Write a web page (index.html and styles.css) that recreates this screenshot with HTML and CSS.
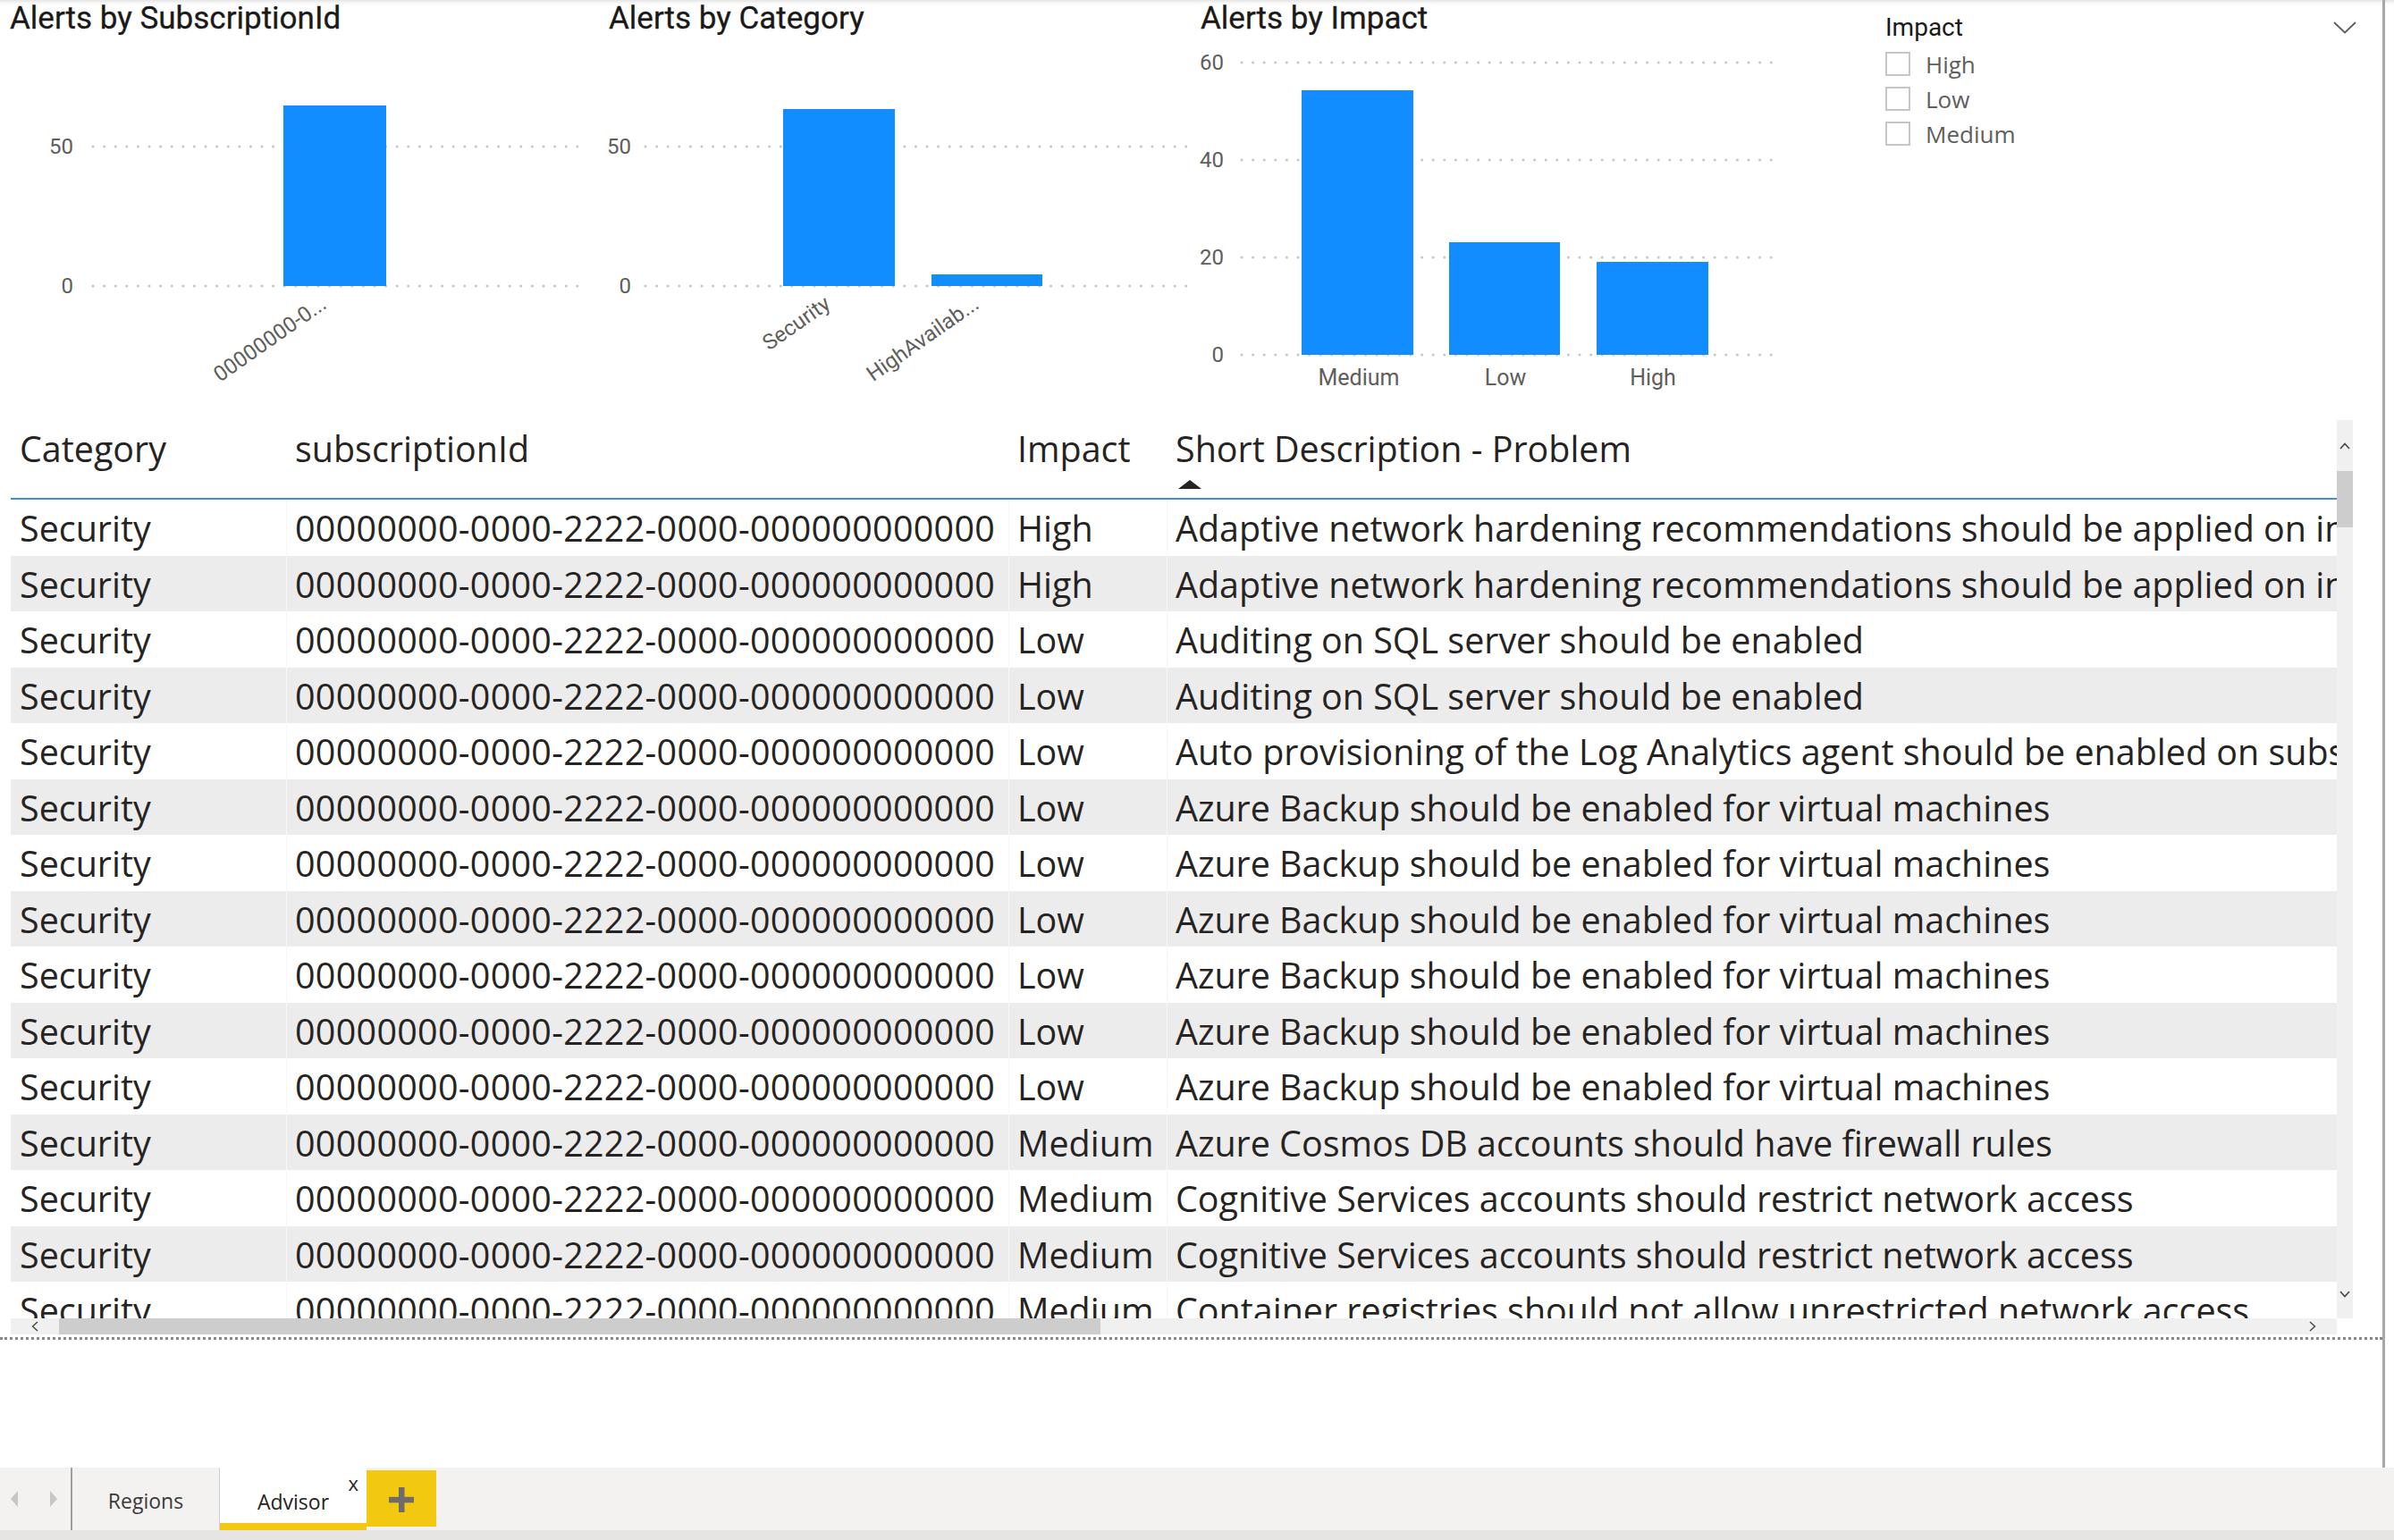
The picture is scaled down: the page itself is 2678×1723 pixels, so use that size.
FILE: index.html
```html
<!DOCTYPE html>
<html>
<head>
<meta charset="utf-8">
<title>Advisor</title>
<link rel="stylesheet" href="styles.css">
</head>
<body>
<div class="page">
  <div class="canvas">
    <div class="report">
      <div class="visuals">
        <section class="chart chart-sub">
          <div class="vtitle">Alerts by SubscriptionId</div>
          <svg class="plot" width="670" height="429" viewBox="0 0 670 429">
            <line class="grid" x1="104" y1="123" x2="656" y2="123"/>
            <line class="grid" x1="104" y1="279" x2="656" y2="279"/>
            <text class="tick" x="82" y="123" text-anchor="end" dominant-baseline="central">50</text>
            <text class="tick" x="82" y="279" text-anchor="end" dominant-baseline="central">0</text>
            <rect class="bar" x="317" y="77" width="115" height="202"/>
            <text class="tick" transform="translate(362 296) rotate(-35)" text-anchor="end" dominant-baseline="central">00000000-0...</text>
          </svg>
        </section>
        <section class="chart chart-cat">
          <div class="vtitle">Alerts by Category</div>
          <svg class="plot" width="662" height="429" viewBox="0 0 662 429">
            <line class="grid" x1="52" y1="123" x2="661" y2="123"/>
            <line class="grid" x1="52" y1="279" x2="661" y2="279"/>
            <text class="tick" x="36" y="123" text-anchor="end" dominant-baseline="central">50</text>
            <text class="tick" x="36" y="279" text-anchor="end" dominant-baseline="central">0</text>
            <rect class="bar" x="206" y="81" width="125" height="198"/>
            <rect class="bar" x="372" y="266" width="124" height="13"/>
            <text class="tick" transform="translate(256 296) rotate(-35)" text-anchor="end" dominant-baseline="central">Security</text>
            <text class="tick" transform="translate(422 296) rotate(-35)" text-anchor="end" dominant-baseline="central">HighAvailab...</text>
          </svg>
        </section>
        <section class="chart chart-imp">
          <div class="vtitle">Alerts by Impact</div>
          <svg class="plot" width="758" height="429" viewBox="0 0 758 429">
            <line class="grid" x1="57" y1="29" x2="658" y2="29"/>
            <line class="grid" x1="57" y1="138" x2="658" y2="138"/>
            <line class="grid" x1="57" y1="247" x2="658" y2="247"/>
            <line class="grid" x1="57" y1="356" x2="658" y2="356"/>
            <text class="tick" x="37" y="29" text-anchor="end" dominant-baseline="central">60</text>
            <text class="tick" x="37" y="138" text-anchor="end" dominant-baseline="central">40</text>
            <text class="tick" x="37" y="247" text-anchor="end" dominant-baseline="central">20</text>
            <text class="tick" x="37" y="356" text-anchor="end" dominant-baseline="central">0</text>
            <rect class="bar" x="124" y="60" width="125" height="296"/>
            <rect class="bar" x="289" y="230" width="124" height="126"/>
            <rect class="bar" x="454" y="252" width="125" height="104"/>
            <text class="tick xlab" x="188" y="381" text-anchor="middle" dominant-baseline="central">Medium</text>
            <text class="tick xlab" x="352" y="381" text-anchor="middle" dominant-baseline="central">Low</text>
            <text class="tick xlab" x="517" y="381" text-anchor="middle" dominant-baseline="central">High</text>
          </svg>
        </section>
        <section class="slicer">
          <div class="slicer-head">
            <span class="slicer-title">Impact</span>
            <svg class="chev" width="26" height="14" viewBox="0 0 26 14"><polyline points="1,1 13,12.5 25,1" fill="none" stroke="#605E5C" stroke-width="1.8"/></svg>
          </div>
          <div class="slicer-list">
            <div class="opt"><span class="box"></span><span>High</span></div>
            <div class="opt"><span class="box"></span><span>Low</span></div>
            <div class="opt"><span class="box"></span><span>Medium</span></div>
          </div>
        </section>
      </div>

      <div class="table-visual">
        <div class="tv-top">
          <div class="tv-content">
            <div class="trow thead">
              <div class="cell">Category</div>
              <div class="cell">subscriptionId</div>
              <div class="cell">Impact</div>
              <div class="cell">Short Description - Problem<svg class="sort" width="30" height="12" viewBox="0 0 30 12"><polygon points="2,11 15,1 28,11" fill="#252423"/></svg></div>
            </div>
            <div class="trow body"><div class="cell">Security</div><div class="cell id">00000000-0000-2222-0000-000000000000</div><div class="cell">High</div><div class="cell">Adaptive network hardening recommendations should be applied on internet facing virtual machines</div></div>
            <div class="trow body alt"><div class="cell">Security</div><div class="cell id">00000000-0000-2222-0000-000000000000</div><div class="cell">High</div><div class="cell">Adaptive network hardening recommendations should be applied on internet facing virtual machines</div></div>
            <div class="trow body"><div class="cell">Security</div><div class="cell id">00000000-0000-2222-0000-000000000000</div><div class="cell">Low</div><div class="cell">Auditing on SQL server should be enabled</div></div>
            <div class="trow body alt"><div class="cell">Security</div><div class="cell id">00000000-0000-2222-0000-000000000000</div><div class="cell">Low</div><div class="cell">Auditing on SQL server should be enabled</div></div>
            <div class="trow body"><div class="cell">Security</div><div class="cell id">00000000-0000-2222-0000-000000000000</div><div class="cell">Low</div><div class="cell">Auto provisioning of the Log Analytics agent should be enabled on subscriptions</div></div>
            <div class="trow body alt"><div class="cell">Security</div><div class="cell id">00000000-0000-2222-0000-000000000000</div><div class="cell">Low</div><div class="cell">Azure Backup should be enabled for virtual machines</div></div>
            <div class="trow body"><div class="cell">Security</div><div class="cell id">00000000-0000-2222-0000-000000000000</div><div class="cell">Low</div><div class="cell">Azure Backup should be enabled for virtual machines</div></div>
            <div class="trow body alt"><div class="cell">Security</div><div class="cell id">00000000-0000-2222-0000-000000000000</div><div class="cell">Low</div><div class="cell">Azure Backup should be enabled for virtual machines</div></div>
            <div class="trow body"><div class="cell">Security</div><div class="cell id">00000000-0000-2222-0000-000000000000</div><div class="cell">Low</div><div class="cell">Azure Backup should be enabled for virtual machines</div></div>
            <div class="trow body alt"><div class="cell">Security</div><div class="cell id">00000000-0000-2222-0000-000000000000</div><div class="cell">Low</div><div class="cell">Azure Backup should be enabled for virtual machines</div></div>
            <div class="trow body"><div class="cell">Security</div><div class="cell id">00000000-0000-2222-0000-000000000000</div><div class="cell">Low</div><div class="cell">Azure Backup should be enabled for virtual machines</div></div>
            <div class="trow body alt"><div class="cell">Security</div><div class="cell id">00000000-0000-2222-0000-000000000000</div><div class="cell">Medium</div><div class="cell">Azure Cosmos DB accounts should have firewall rules</div></div>
            <div class="trow body"><div class="cell">Security</div><div class="cell id">00000000-0000-2222-0000-000000000000</div><div class="cell">Medium</div><div class="cell">Cognitive Services accounts should restrict network access</div></div>
            <div class="trow body alt"><div class="cell">Security</div><div class="cell id">00000000-0000-2222-0000-000000000000</div><div class="cell">Medium</div><div class="cell">Cognitive Services accounts should restrict network access</div></div>
            <div class="trow body"><div class="cell">Security</div><div class="cell id">00000000-0000-2222-0000-000000000000</div><div class="cell">Medium</div><div class="cell">Container registries should not allow unrestricted network access</div></div>
          </div>
          <div class="vscroll">
            <div class="vs-end vs-up"><svg width="12" height="8" viewBox="0 0 12 8"><polyline points="1,7 6,1.5 11,7" fill="none" stroke="#444" stroke-width="1.6"/></svg></div>
            <div class="vs-thumb"></div>
            <div class="vs-fill"></div>
            <div class="vs-end vs-down"><svg width="12" height="8" viewBox="0 0 12 8"><polyline points="1,1 6,6.5 11,1" fill="none" stroke="#444" stroke-width="1.6"/></svg></div>
          </div>
        </div>
        <div class="hscroll-row">
          <div class="hscroll">
            <div class="hs-end"><svg width="8" height="12" viewBox="0 0 8 12"><polyline points="7,1 1.5,6 7,11" fill="none" stroke="#444" stroke-width="1.4"/></svg></div>
            <div class="hs-thumb"></div>
            <div class="hs-fill"></div>
            <div class="hs-end"><svg width="8" height="12" viewBox="0 0 8 12"><polyline points="1,1 6.5,6 1,11" fill="none" stroke="#444" stroke-width="1.4"/></svg></div>
          </div>
          <div class="hs-corner"></div>
        </div>
      </div>
      <div class="dotted"></div>
    </div>
    <div class="vline"></div>
  </div>

  <div class="tabbar">
    <div class="nav">
      <svg width="10" height="18" viewBox="0 0 10 18"><polygon points="9,0 1,9 9,18" fill="#C8C6C4"/></svg>
      <svg width="10" height="18" viewBox="0 0 10 18"><polygon points="1,0 9,9 1,18" fill="#C8C6C4"/></svg>
    </div>
    <div class="nav-div"></div>
    <div class="tab">Regions</div>
    <div class="tab-sep"></div>
    <div class="tab active">Advisor<span class="close">x</span></div>
    <div class="add"><svg width="30" height="30" viewBox="0 0 30 30"><rect x="12" y="1" width="6.5" height="28" fill="#6E6C6A"/><rect x="1" y="11.8" width="28" height="6.5" fill="#6E6C6A"/></svg></div>
  </div>
  <div class="strip"></div>
</div>
</body>
</html>
```

FILE: styles.css
```css
* { box-sizing: border-box; margin: 0; padding: 0; }

body {
  width: 2678px;
  height: 1723px;
  overflow: hidden;
  background: #ffffff;
  font-family: "Open Sans", "Noto Sans", sans-serif;
  color: #252423;
}

.page { display: flex; flex-direction: column; height: 1723px; }

.canvas {
  display: flex;
  height: 1642px;
  box-shadow: inset 0 5px 4px -3px rgba(0, 0, 0, 0.12);
}

.report { width: 2665px; display: flex; flex-direction: column; }

.vline { width: 3px; background: #A8A8A8; }

/* ---------- visuals row ---------- */
.visuals { display: flex; height: 470px; }

.chart { display: flex; flex-direction: column; }
.chart-sub { width: 670px; }
.chart-cat { width: 662px; }
.chart-imp { width: 758px; }

.vtitle {
  font-family: Roboto, "Liberation Sans", sans-serif;
  font-size: 35px;
  line-height: 41px;
  height: 41px;
  padding-left: 11px;
  color: #1B1A19;
  white-space: nowrap;
  -webkit-text-stroke: 0.3px #1B1A19;
}

.plot { display: block; }

.grid {
  stroke: #C8C6C4;
  stroke-width: 3;
  stroke-linecap: round;
  stroke-dasharray: 0 12.6;
}

.tick {
  font-family: Roboto, "Liberation Sans", sans-serif;
  font-size: 24px;
  fill: #605E5C;
}

.xlab { font-size: 25px; }

.bar { fill: #118DFF; }

/* ---------- slicer ---------- */
.slicer { width: 575px; padding: 14px 29px 0 19px; }

.slicer-head {
  display: flex;
  justify-content: space-between;
  align-items: center;
  height: 33px;
}

.slicer-title {
  font-family: Roboto, "Liberation Sans", sans-serif;
  font-size: 28px;
  line-height: 33px;
  color: #1B1A19;
}

.chev { display: block; }

.slicer-list { display: flex; flex-direction: column; margin-top: 5px; }

.opt {
  display: flex;
  align-items: center;
  height: 39px;
  gap: 17px;
  font-size: 26px;
  color: #605E5C;
}

.box {
  width: 28px;
  height: 27px;
  border: 2px solid #C8C6C4;
  background: #ffffff;
}

/* ---------- table ---------- */
.table-visual {
  margin-left: 12px;
  width: 2620px;
  display: flex;
  flex-direction: column;
}

.tv-top { display: flex; height: 1005px; }

.tv-content { width: 2602px; overflow: hidden; }

.trow {
  display: grid;
  grid-template-columns: 308px 808px 177px 1309px;
}

.cell {
  padding-left: 10px;
  white-space: nowrap;
  overflow: hidden;
  font-size: 39.45px;
}

.cell + .cell { border-left: 1px solid #F7F7F7; padding-left: 9px; }

.thead {
  height: 89px;
  border-bottom: 2px solid #3F8FD8;
}

.thead .cell { line-height: 62px; padding-top: 1px; border-left-color: transparent; }

.sort { display: block; margin-top: 3px; margin-left: 1px; }

.trow.body { height: 62.5px; line-height: 64px; }

.trow.alt { background: #EDECEC; }

.id { letter-spacing: 0.3px; }

.vscroll {
  width: 18px;
  background: #F0F0F0;
  display: flex;
  flex-direction: column;
}

.vs-end { display: flex; align-items: center; justify-content: center; }
.vs-up { height: 57px; }
.vs-down { height: 54px; }
.vs-thumb { height: 63px; background: #CDCDCD; }
.vs-fill { flex: 1; }

.hscroll-row { display: flex; height: 18px; }

.hscroll {
  width: 2602px;
  background: #F0F0F0;
  display: flex;
}

.hs-end { width: 54px; display: flex; align-items: center; justify-content: center; }
.hs-thumb { width: 1165px; background: #CDCDCD; }
.hs-fill { flex: 1; }
.hs-corner { width: 18px; background: #ffffff; }

.dotted {
  margin-top: 3px;
  border-top: 3px dotted #8A8886;
}

/* ---------- tab bar ---------- */
.tabbar { height: 70px; background: #F3F2F1; display: flex; }

.nav {
  width: 79px;
  display: flex;
  align-items: center;
  justify-content: space-between;
  padding: 0 14px 0 11px;
}

.nav-div { width: 2px; background: #A19F9D; }

.tab {
  width: 164px;
  display: flex;
  align-items: center;
  justify-content: center;
  padding-top: 4px;
  font-size: 23px;
  color: #3B3A39;
}

.tab-sep { width: 1px; background: #D2D0CE; }

.tab.active {
  background: #ffffff;
  border-bottom: 8px solid #F2C811;
  padding-top: 13px;
  color: #252423;
  position: relative;
}

.close {
  position: absolute;
  right: 9px;
  top: 6px;
  font-size: 22px;
  line-height: 22px;
  color: #252423;
}

.add {
  width: 78px;
  margin: 3px 0 4px;
  padding-top: 3px;
  background: #F2C811;
  display: flex;
  align-items: center;
  justify-content: center;
}

.strip { height: 11px; background: #E6E5E4; }
```
